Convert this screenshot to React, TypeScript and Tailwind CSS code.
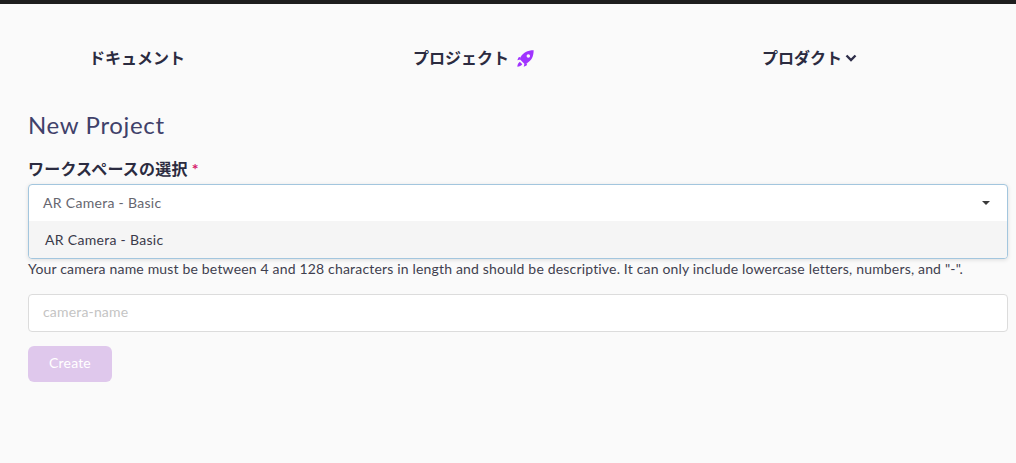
const bodyFont = { fontFamily: '"Lato", "Noto Sans CJK JP", sans-serif' };

function RocketIcon() {
  return (
    <svg className="w-[17px] h-[17px] text-[#a033ff]" viewBox="0 0 24 24" fill="currentColor">
      <path
        fillRule="evenodd"
        d="M23.500 .5C15 .5 8.500 3.500 5 10.500L4 13l7 7 2.500-1c7-3.500 10-10 10-18.500zM16 6a2.500 2.500 0 1 1 0 5 2.500 2.500 0 0 1 0-5z"
      />
      <path d="M5 9.500 2 10.500 .5 14.500 4.500 13.500zM14.500 19l-1 3-4 1.500 1-4zM4 16.500C2 18 .5 20.500 .5 23.500c3 0 5.500-1.500 7-3.500z" />
    </svg>
  );
}

function ChevronIcon() {
  return (
    <svg className="w-[12px] h-[12px] text-[#2f2f4a]" viewBox="0 0 12 12" fill="none" stroke="currentColor" strokeWidth="2.4">
      <path d="M1.500 3.500 6 8l4.500-4.500" />
    </svg>
  );
}

export default function App() {
  return (
    <div className="min-h-[463px] bg-[#fafafa] border-t-[4px] border-[#1e1e1e] text-[#2f2f45]" style={bodyFont}>
      <nav className="flex items-center gap-[228px] pl-[89px] pt-[44px] h-[64px] text-[16px] font-bold leading-[24px] text-[#2b2b40]">
        <a>ドキュメント</a>
        <a className="flex items-center gap-[8px]">
          プロジェクト
          <RocketIcon />
        </a>
        <a className="flex items-center gap-[3px]">
          プロダクト
          <ChevronIcon />
        </a>
      </nav>

      <main className="pl-[28px] pr-[8px] pt-[40px]">
        <h1 className="text-[24px] leading-[34px] tracking-[0.65px] text-[#40416a]">New Project</h1>

        <label className="block mt-[16px] text-[16px] font-bold leading-[22px] tracking-[0.2px] text-[#2b2b40]">
          ワークスペースの選択 <span className="text-[#d6186b]">*</span>
        </label>

        <div className="mt-[4px] rounded-[4px] border border-[#a3c6de] bg-white shadow-[0_1px_4px_rgba(0,0,0,0.12)] overflow-hidden">
          <div className="flex items-center justify-between h-[36px] pl-[14px] pr-[17px] text-[14px] tracking-[0.3px] text-[#66666f]">
            <span className="-mt-[2px]">AR Camera - Basic</span>
            <span className="border-x-[4px] border-t-[4px] border-x-transparent border-t-[#3a3a3a]" />
          </div>
          <div className="flex items-center h-[37px] pl-[16px] pb-[1px] bg-[#f5f5f5] text-[14px] tracking-[0.3px] text-[#3a3a4a]">AR Camera - Basic</div>
        </div>

        <p className="text-[14px] leading-[20px] tracking-[0.175px] text-[#3f3f4f]">
          Your camera name must be between 4 and 128 characters in length and should be descriptive. It can only include lowercase letters, numbers, and "-".
        </p>

        <input
          placeholder="camera-name"
          className="block w-full mt-[15px] h-[38px] px-[14px] pb-[3px] rounded-[4px] border border-[#dcdcdc] bg-white text-[14px] tracking-[0.17px] placeholder:text-[#c4c4c4] outline-none"
        />

        <button className="mt-[14px] w-[84px] h-[36px] pb-[3px] rounded-[6px] bg-[#dfc8ec] text-[14px] tracking-[0.17px] text-white">Create</button>
      </main>
    </div>
  );
}
